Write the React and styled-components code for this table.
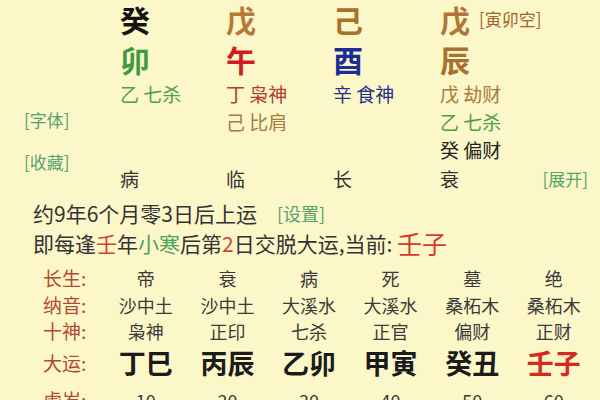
import React from "react";
import styled, { createGlobalStyle } from "styled-components";

const GlobalStyle = createGlobalStyle`
  html, body {
    margin: 0;
    padding: 0;
    overflow: hidden;
    background: #fcf7c9;
  }
  body {
    font-family: "Noto Sans CJK SC", "Noto Sans", sans-serif;
  }
`;

const Page = styled.div`
  width: 600px;
  height: 400px;
  overflow: hidden;
  background: #fcf7c9;
  color: #333;
`;

const Pillars = styled.div`
  display: grid;
  grid-template-columns: 120px 106px 107px 107px 100px 1fr;
  height: 194px;
`;

const Side = styled.div`
  display: flex;
  flex-direction: column;
  align-items: ${(p) => (p.$right ? "flex-end" : "flex-start")};
  padding-top: ${(p) => p.$top}px;
  padding-left: ${(p) => (p.$right ? 0 : 24)}px;
  padding-right: ${(p) => (p.$right ? 12 : 0)}px;
  gap: 18px;
`;

const Bracket = styled.span`
  font-size: ${(p) => p.$size || 17}px;
  line-height: 24px;
  font-weight: 400;
  color: ${(p) => p.$color || "#56a26d"};
  white-space: nowrap;
`;

const Pillar = styled.div`
  display: flex;
  flex-direction: column;
`;

const Stem = styled.div`
  display: flex;
  align-items: center;
  gap: 9px;
  height: ${(p) => p.$h}px;
  line-height: 1.2;
  font-size: 30px;
  font-weight: 700;
  color: ${(p) => p.$color};
`;

const HiddenList = styled.div`
  display: flex;
  flex-direction: column;
  height: 84px;
`;

const Hidden = styled.div`
  height: 28px;
  line-height: 28px;
  font-size: 19px;
  color: ${(p) => p.$color};
  white-space: nowrap;
`;

const Stage = styled.div`
  height: 30px;
  line-height: 30px;
  font-size: 19px;
  color: #333;
`;

const Line = styled.div`
  height: 30px;
  line-height: 30px;
  padding-left: 33px;
  font-size: 21px;
  color: #333;
  white-space: nowrap;
  display: flex;
  align-items: center;
`;

const Mark = styled.span`
  color: ${(p) => p.$color};
  font-size: ${(p) => (p.$size ? `${p.$size}px` : "inherit")};
`;

const Table = styled.div`
  display: grid;
  grid-template-columns: 62px repeat(6, 81.6px);
  grid-template-rows: 27px 27px 26px 38px 36px;
  padding-left: 43px;
  margin-top: 6px;
  align-items: center;
`;

const Label = styled.div`
  font-size: 19px;
  line-height: 24px;
  color: #b24b35;
  white-space: nowrap;
`;

const Cell = styled.div`
  text-align: center;
  font-size: 18px;
  line-height: 24px;
  color: #3a3a3a;
  white-space: nowrap;
`;

const Luck = styled.div`
  text-align: center;
  font-size: 27px;
  line-height: 34px;
  font-weight: 600;
  color: ${(p) => p.$color || "#1b1b1b"};
  white-space: nowrap;
`;

const pillars = [
  {
    stem: "癸", stemColor: "#141414",
    branch: "卯", branchColor: "#3e9b3f",
    hidden: [{ text: "乙 七杀", color: "#4e9d4f" }],
    stage: "病",
  },
  {
    stem: "戊", stemColor: "#b57a38",
    branch: "午", branchColor: "#cf1c1c",
    hidden: [
      { text: "丁 枭神", color: "#b13a2c" },
      { text: "己 比肩", color: "#a67b44" },
    ],
    stage: "临",
  },
  {
    stem: "己", stemColor: "#a96f2d",
    branch: "酉", branchColor: "#1c2c98",
    hidden: [{ text: "辛 食神", color: "#24318a" }],
    stage: "长",
  },
  {
    stem: "戊", stemColor: "#b07636",
    branch: "辰", branchColor: "#a9712f",
    hidden: [
      { text: "戊 劫财", color: "#a97a3a" },
      { text: "乙 七杀", color: "#4e9d4f" },
      { text: "癸 偏财", color: "#222" },
    ],
    stage: "衰",
    empty: "[寅卯空]",
  },
];

const rows = [
  { label: "长生:", cells: ["帝", "衰", "病", "死", "墓", "绝"] },
  { label: "纳音:", cells: ["沙中土", "沙中土", "大溪水", "大溪水", "桑柘木", "桑柘木"] },
  { label: "十神:", cells: ["枭神", "正印", "七杀", "正官", "偏财", "正财"] },
];

const luck = ["丁巳", "丙辰", "乙卯", "甲寅", "癸丑", "壬子"];
const ages = ["10", "20", "30", "40", "50", "60"];

const App = () => {
  return (
    <Page>
      <GlobalStyle />
      <Pillars>
        <Side $top={108}>
          <Bracket>[字体]</Bracket>
          <Bracket>[收藏]</Bracket>
        </Side>
        {pillars.map((p, i) => (
          <Pillar key={i}>
            <Stem $h={37} $color={p.stemColor}>
              {p.stem}
              {p.empty && (
                <Bracket $size={17} $color="#a0652d">
                  {p.empty}
                </Bracket>
              )}
            </Stem>
            <Stem $h={43} $color={p.branchColor}>
              {p.branch}
            </Stem>
            <HiddenList>
              {p.hidden.map((h, j) => (
                <Hidden key={j} $color={h.color}>
                  {h.text}
                </Hidden>
              ))}
            </HiddenList>
            <Stage>{p.stage}</Stage>
          </Pillar>
        ))}
        <Side $top={167} $right>
          <Bracket>[展开]</Bracket>
        </Side>
      </Pillars>

      <Line style={{ marginTop: 4 }}>
        约9年6个月零3日后上运
        <Bracket $size={18} style={{ marginLeft: 20 }}>
          [设置]
        </Bracket>
      </Line>
      <Line>
        即每逢<Mark $color="#d2412f">壬</Mark>年<Mark $color="#4da163">小寒</Mark>后第
        <Mark $color="#d2412f">2</Mark>日交脱大运,当前:&nbsp;
        <Mark $color="#d53a2a" $size={25}>
          壬子
        </Mark>
      </Line>

      <Table>
        {rows.map((r) => (
          <React.Fragment key={r.label}>
            <Label>{r.label}</Label>
            {r.cells.map((c, i) => (
              <Cell key={i}>{c}</Cell>
            ))}
          </React.Fragment>
        ))}
        <Label>大运:</Label>
        {luck.map((l, i) => (
          <Luck key={i} $color={i === luck.length - 1 ? "#d52b1f" : undefined}>
            {l}
          </Luck>
        ))}
        <Label>虚岁:</Label>
        {ages.map((a) => (
          <Cell key={a}>{a}</Cell>
        ))}
      </Table>
    </Page>
  );
};

export default App;
